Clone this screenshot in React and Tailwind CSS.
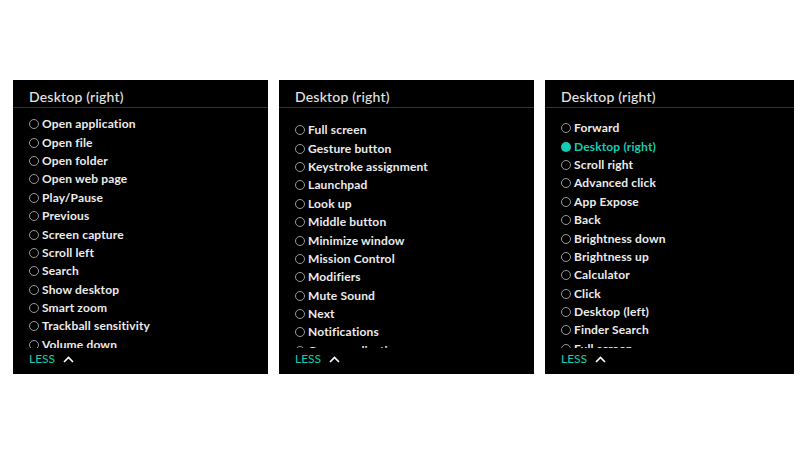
const panels = [
  {
    offset: 'pt-[7px]',
    items: [
      'Open application', 'Open file', 'Open folder', 'Open web page', 'Play/Pause', 'Previous',
      'Screen capture', 'Scroll left', 'Search', 'Show desktop', 'Smart zoom', 'Trackball sensitivity',
      'Volume down', 'Volume up',
    ],
  },
  {
    offset: 'pt-[13px]',
    items: [
      'Full screen', 'Gesture button', 'Keystroke assignment', 'Launchpad', 'Look up', 'Middle button',
      'Minimize window', 'Mission Control', 'Modifiers', 'Mute Sound', 'Next', 'Notifications',
      'Open application',
    ],
  },
  {
    offset: 'pt-[11px]',
    selected: 'Desktop (right)',
    items: [
      'Forward', 'Desktop (right)', 'Scroll right', 'Advanced click', 'App Expose', 'Back',
      'Brightness down', 'Brightness up', 'Calculator', 'Click', 'Desktop (left)', 'Finder Search',
      'Full screen',
    ],
  },
];

function Option({ label, active }) {
  return (
    <li className={'flex items-center h-[18.4px] ' + (active ? 'text-[#14cdb4]' : 'text-[#ececec]')}>
      {active ? (
        <span className="w-[10px] h-[10px] rounded-full bg-[#14cdb4] shrink-0" />
      ) : (
        <span className="w-[10px] h-[10px] rounded-full border border-[#9a9a9a] shrink-0" />
      )}
      <span className="ml-[3px] whitespace-nowrap">{label}</span>
    </li>
  );
}

function Panel({ panel, width }) {
  return (
    <div className={'bg-black h-[294px] flex flex-col ' + width}>
      {/* header */}
      <div className="h-[28px] border-b border-[#333] px-4 flex items-center">
        <span className="text-[14px] font-medium text-[#e4e4e4] leading-none pt-[7px] tracking-[0.2px]">Desktop (right)</span>
      </div>

      {/* options list, scrolled */}
      <div className="h-[240px] overflow-hidden">
        <ul className={'pl-4 text-[12px] font-bold tracking-[0.15px] ' + panel.offset}>
          {panel.items.map((it) => (
            <Option key={it} label={it} active={it === panel.selected} />
          ))}
        </ul>
      </div>

      <div className="flex items-center gap-[8px] px-4 pt-[4px]">
        <span className="text-[12px] text-[#14cdb4] leading-[14px]">LESS</span>
        <svg width="11" height="7" viewBox="0 0 11 7" fill="none">
          <path d="M1 6 L5.5 1.5 L10 6" stroke="#fff" strokeWidth="1.6" />
        </svg>
      </div>
    </div>
  );
}

export default function App() {
  return (
    <div className="w-[800px] h-[450px] bg-white pt-[80px] pl-[13px] flex gap-[11px] items-start" style={{ fontFamily: 'Lato, "Open Sans", sans-serif' }}>
      <Panel panel={panels[0]} width="w-[255px]" />
      <Panel panel={panels[1]} width="w-[255px]" />
      <Panel panel={panels[2]} width="w-[249px]" />
    </div>
  );
}
